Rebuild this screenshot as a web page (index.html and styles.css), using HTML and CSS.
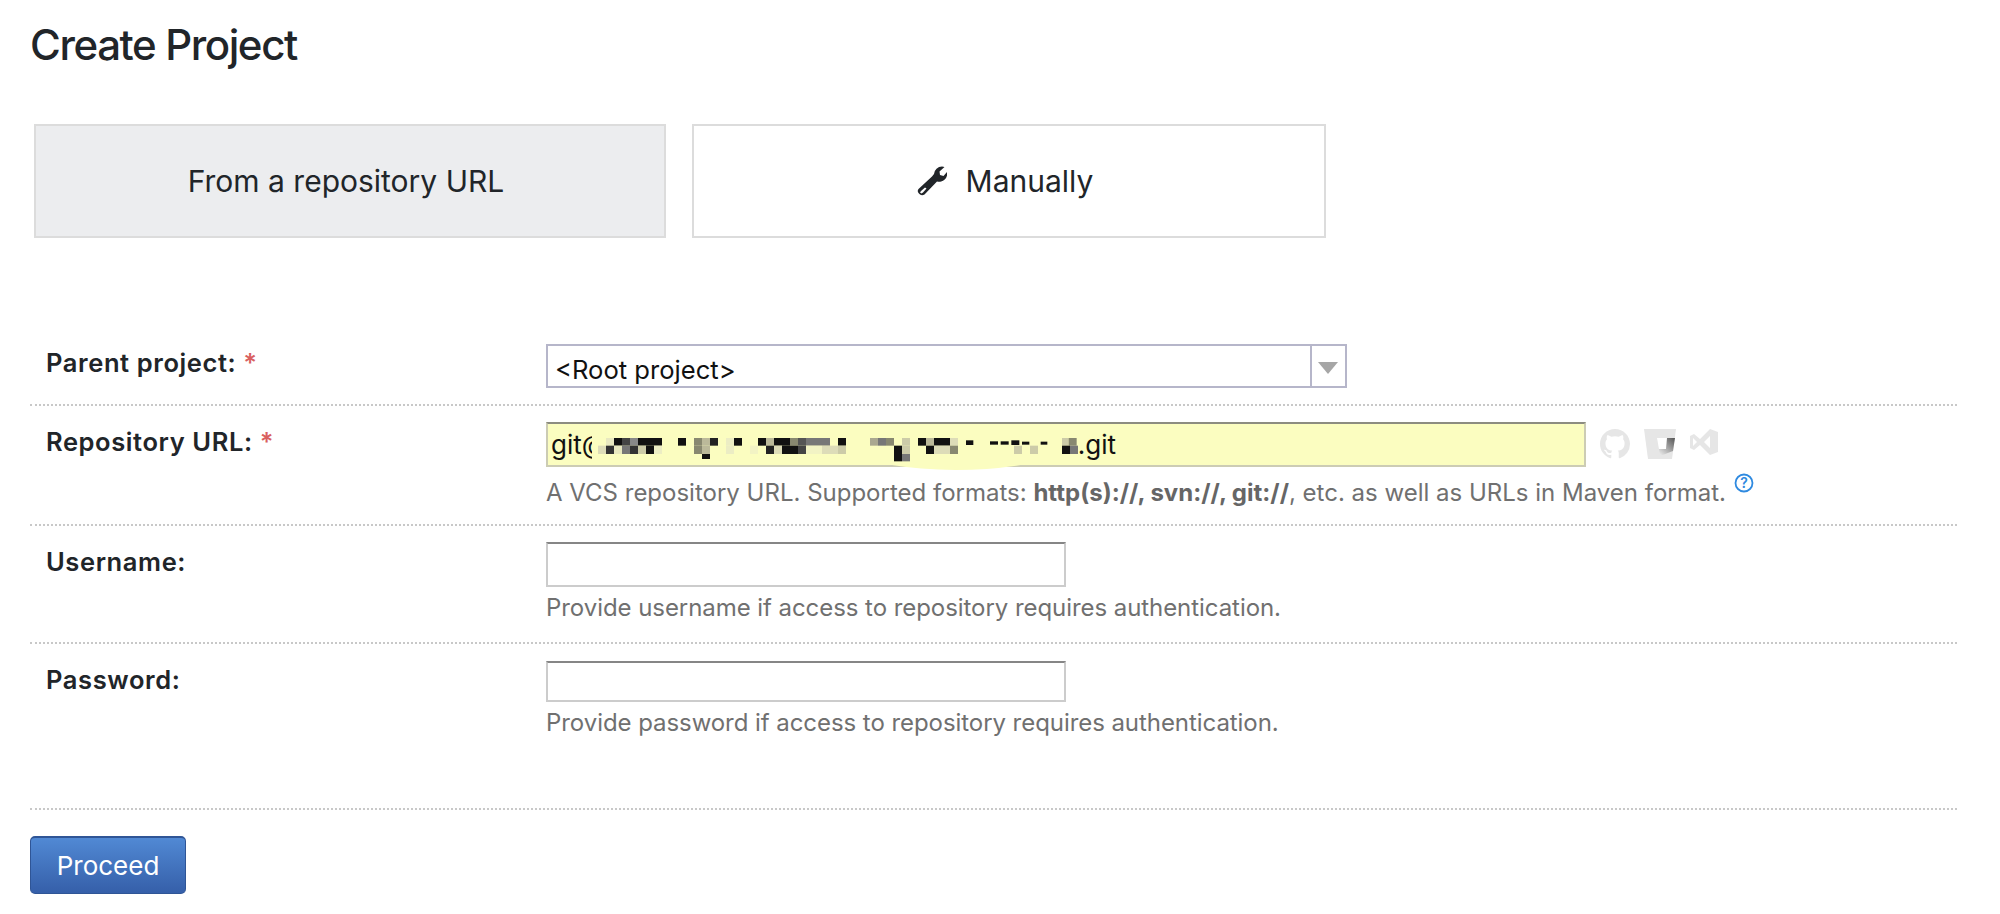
FILE: index.html
```html
<!DOCTYPE html>
<html lang="en">
<head>
    <meta charset="UTF-8">
    <meta name="viewport" content="width=device-width, initial-scale=1.0">
    <title>Create Project</title>
    <link rel="stylesheet" href="styles.css">
</head>
<body>

<h1>Create Project</h1>

<div class="tabs">
    <div class="tab tabActive">From a repository URL</div>
    <div class="tab">
        <svg class="wrench" viewBox="0 0 30 30"><path fill-rule="evenodd" d="M17 8A8 8 0 0 1 25 0.500L27.500 1 22.500 5.500 23 9 26.500 10 30 6A8 8 0 0 1 20 15.500L7.500 28.500Q5 30 3 28.500L1.500 27Q0 25 1.500 23L15 10.500ZM4 25L3 26.500 4.500 27.500 6 26.500 9.500 22.500 8 21.500Z"/></svg>
        Manually
    </div>
</div>

<div class="formRow rowParent">
    <label>Parent project: <span class="req">*</span></label>
    <div class="field">
        <div class="selectBox">
            <span class="selectValue">&lt;Root project&gt;</span>
            <span class="selectArrow"></span>
        </div>
    </div>
</div>

<div class="formRow rowUrl">
    <label>Repository URL: <span class="req">*</span></label>
    <div class="field">
        <div class="urlLine">
            <div class="textInput urlInput">
                <span>git@</span>
                <!-- pixelated part of the address, coordinates are 3x -->
                <svg class="blur" width="486" height="40" viewBox="0 0 1458 120">
                    <path fill="#fbfdc0" d="M885 118Q1090 152 1299 118z"/>
                    <rect x="0" y="0" width="42" height="120" fill="#fbfdc0"/>
                    <g fill="#111">
                        <!-- top row -->
                        <rect x="42" y="39" width="24" height="23" fill="#e8e8c0"/>
                        <rect x="66" y="39" width="24" height="23"/>
                        <rect x="90" y="39" width="24" height="23" fill="#444"/>
                        <rect x="114" y="39" width="24" height="23" fill="#888"/>
                        <rect x="138" y="39" width="72" height="23"/>
                        <rect x="258" y="39" width="24" height="23"/>
                        <rect x="306" y="39" width="24" height="23" fill="#888870"/>
                        <rect x="330" y="39" width="24" height="23" fill="#bbb99a"/>
                        <rect x="354" y="39" width="24" height="23" fill="#222"/>
                        <rect x="402" y="39" width="24" height="23" fill="#ecedc4"/>
                        <rect x="426" y="39" width="24" height="23"/>
                        <rect x="498" y="39" width="24" height="23"/>
                        <rect x="522" y="39" width="24" height="23" fill="#bbb99a"/>
                        <rect x="546" y="39" width="48" height="23"/>
                        <rect x="594" y="39" width="24" height="23" fill="#888870"/>
                        <rect x="618" y="39" width="24" height="23" fill="#555"/>
                        <rect x="642" y="39" width="72" height="23" fill="#777"/>
                        <rect x="738" y="39" width="24" height="23"/>
                        <rect x="834" y="39" width="24" height="23" fill="#aaa890"/>
                        <rect x="858" y="39" width="24" height="23" fill="#777"/>
                        <rect x="882" y="39" width="24" height="23" fill="#888870"/>
                        <rect x="930" y="39" width="24" height="23" fill="#cccba8"/>
                        <rect x="978" y="39" width="24" height="23"/>
                        <rect x="1002" y="39" width="24" height="23" fill="#bbb99a"/>
                        <rect x="1026" y="39" width="48" height="23"/>
                        <rect x="1074" y="39" width="24" height="23" fill="#dddcb8"/>
                        <rect x="1122" y="46" width="22" height="14"/>
                        <rect x="1194" y="49" width="24" height="10"/>
                        <rect x="1226" y="49" width="24" height="10"/>
                        <rect x="1258" y="46" width="24" height="14"/>
                        <rect x="1290" y="50" width="22" height="9"/>
                        <rect x="1346" y="50" width="20" height="9"/>
                        <rect x="1410" y="39" width="20" height="23" fill="#cccba8"/>
                        <rect x="1430" y="39" width="24" height="23" fill="#888870"/>
                        <!-- middle row -->
                        <rect x="18" y="62" width="24" height="25" fill="#dddcb8"/>
                        <rect x="42" y="62" width="24" height="25" fill="#333"/>
                        <rect x="66" y="62" width="24" height="25" fill="#e8e8c0"/>
                        <rect x="90" y="62" width="24" height="25" fill="#777"/>
                        <rect x="114" y="62" width="24" height="25" fill="#333"/>
                        <rect x="138" y="62" width="24" height="25" fill="#cccba8"/>
                        <rect x="162" y="62" width="24" height="25"/>
                        <rect x="186" y="62" width="24" height="25" fill="#ecedc4"/>
                        <rect x="306" y="62" width="24" height="25" fill="#888870"/>
                        <rect x="330" y="62" width="24" height="25" fill="#bbb99a"/>
                        <rect x="402" y="62" width="24" height="25" fill="#ecedc4"/>
                        <rect x="474" y="62" width="24" height="25" fill="#f2f3c4"/>
                        <rect x="522" y="62" width="24" height="25" fill="#222"/>
                        <rect x="546" y="62" width="24" height="25" fill="#dddcb8"/>
                        <rect x="570" y="62" width="48" height="25"/>
                        <rect x="618" y="62" width="24" height="25" fill="#444"/>
                        <rect x="642" y="62" width="48" height="25" fill="#f2f3c4"/>
                        <rect x="690" y="62" width="48" height="25" fill="#dddcb8"/>
                        <rect x="738" y="62" width="24" height="25" fill="#cccba8"/>
                        <rect x="906" y="62" width="24" height="25"/>
                        <rect x="930" y="62" width="24" height="25" fill="#cccba8"/>
                        <rect x="1002" y="62" width="24" height="25"/>
                        <rect x="1026" y="62" width="48" height="25" fill="#dddcb8"/>
                        <rect x="1074" y="62" width="24" height="25" fill="#888870"/>
                        <rect x="1266" y="62" width="24" height="25" fill="#cccba8"/>
                        <rect x="1314" y="62" width="24" height="25" fill="#cccba8"/>
                        <rect x="1410" y="62" width="24" height="25"/>
                        <rect x="1434" y="62" width="24" height="25" fill="#777"/>
                        <!-- bottom row -->
                        <rect x="330" y="87" width="24" height="15"/>
                        <rect x="906" y="87" width="24" height="22"/>
                        <rect x="930" y="87" width="24" height="22" fill="#777"/>
                    </g>
                </svg>
                <span>.git</span>
            </div>
            <div class="vcsIcons">
                <svg width="30" height="30" viewBox="0 0 16 16"><path fill="#e6e6e6" d="M8 0C3.580 0 0 3.580 0 8c0 3.540 2.290 6.530 5.470 7.590.4.070.55-.17.55-.38 0-.19-.01-.82-.01-1.490-2.010.37-2.530-.49-2.690-.94-.09-.23-.48-.94-.82-1.130-.28-.15-.68-.52-.01-.53.63-.01 1.080.58 1.230.82.72 1.210 1.870.87 2.330.66.070-.52.28-.87.51-1.070-1.780-.2-3.640-.89-3.640-3.950 0-.87.31-1.590.82-2.150-.08-.2-.36-1.020.08-2.120 0 0 .67-.21 2.200.82.64-.18 1.320-.27 2-.27s1.360.09 2 .27c1.530-1.040 2.200-.82 2.200-.82.44 1.100.16 1.920.08 2.120.51.56.82 1.270.82 2.150 0 3.070-1.870 3.750-3.650 3.950.29.25.54.73.54 1.480 0 1.070-.01 1.930-.01 2.200 0 .21.15.46.55.38A8.010 8.010 0 0 0 16 8c0-4.420-3.580-8-8-8z"/></svg>
                <svg width="32" height="30" viewBox="0 0 32 30"><defs><linearGradient id="bbGrad" x1="1" y1="0" x2="0.200" y2="1"><stop offset="0" stop-color="#555"/><stop offset="1" stop-color="#e6e6e6"/></linearGradient></defs><path fill="#e6e6e6" d="M0 0H32L28 30H4z"/><path fill="#fff" d="M13 9H24L22 20H15z"/><path fill="url(#bbGrad)" d="M23 9H31L29 22 16 27 15 20H22z"/></svg>
                <svg width="28" height="26" viewBox="0 0 28 26"><path fill="#e6e6e6" fill-rule="evenodd" d="M20 0L28 3V23L20 26 10 16 4 21 0 19V7L4 5 10 10ZM20 7L14 13 20 19ZM3 9V17L7 13Z"/></svg>
            </div>
        </div>
        <p class="hint hintUrl">A VCS repository URL. Supported formats: <b>http(s)://, svn://, git://</b>, etc. as well as URLs in Maven format.<svg class="helpIcon" width="20" height="20" viewBox="0 0 20 20"><circle cx="10" cy="10" r="8.500" fill="none" stroke="#2f8ae0" stroke-width="1.800"/><text x="10" y="15" text-anchor="middle" class="helpMark">?</text></svg></p>
    </div>
</div>

<div class="formRow rowUser">
    <label>Username:</label>
    <div class="field">
        <input type="text" class="textInput shortInput userInput">
        <p class="hint">Provide username if access to repository requires authentication.</p>
    </div>
</div>

<div class="formRow rowPass">
    <label>Password:</label>
    <div class="field">
        <input type="password" class="textInput shortInput passInput">
        <p class="hint">Provide password if access to repository requires authentication.</p>
    </div>
</div>

<button class="proceedBtn">Proceed</button>

</body>
</html>
```

FILE: styles.css
```css
html, body {
    height: 914px;
    overflow: hidden;
}
body {
    font-family: Inter, "Liberation Sans", sans-serif;
    margin: 0;
    padding: 0 43px 0 30px;
    background-color: #fff;
    color: #212529;
}
h1 {
    font-size: 42px;
    font-weight: 500;
    line-height: 50px;
    margin: 20px 0 0;
    letter-spacing: -1.4px;
}

/* Tabs */
.tabs {
    display: flex;
    gap: 26px;
    margin: 54px 0 0 4px;
}
.tab {
    width: 634px;
    height: 114px;
    box-sizing: border-box;
    border: 2px solid #dcdcdc;
    padding-right: 8px;
    display: flex;
    align-items: center;
    justify-content: center;
    gap: 19px;
    font-size: 30px;
}
.tabActive {
    width: 632px;
    background-color: #ecedef;
}
.wrench {
    width: 30px;
    height: 30px;
    fill: #212529;
}

/* Form rows */
.formRow {
    display: flex;
    border-bottom: 2px dotted #c8c8c8;
    box-sizing: border-box;
}
.formRow label {
    width: 516px;
    padding-left: 16px;
    box-sizing: border-box;
    font-size: 25.500px;
    font-weight: 600;
    letter-spacing: 0.6px;
    flex-shrink: 0;
}
.req {
    color: #d9605f;
}
.rowParent {
    margin-top: 106px;
    height: 62px;
}
.rowParent label {
    line-height: 38px;
}
.rowUrl {
    height: 120px;
    padding-top: 16px;
}
.rowUrl label {
    line-height: 40px;
}
.rowUser {
    height: 118px;
    padding-top: 16px;
}
.rowUser label {
    line-height: 40px;
}
.rowPass {
    height: 166px;
    padding-top: 17px;
}
.rowPass label {
    line-height: 38px;
}
.field {
    flex: 1;
}

.selectBox {
    width: 801px;
    height: 44px;
    box-sizing: border-box;
    border: 2px solid #b6b6ca;
    display: flex;
    font-size: 25.600px;
    color: #111;
}
.selectValue {
    flex: 1;
    padding: 6px 0 0 7px;
    line-height: 36px;
    border-right: 2px solid #b6b6ca;
}
.selectArrow {
    width: 33px;
    position: relative;
}
.selectArrow::after {
    content: "";
    position: absolute;
    left: 6px;
    top: 16px;
    border-left: 10px solid transparent;
    border-right: 10px solid transparent;
    border-top: 12px solid #a6a6a6;
}

.urlLine {
    display: flex;
    align-items: flex-start;
}
.textInput {
    box-sizing: border-box;
    border: 2px solid #ccc;
    border-top-color: #868686;
    background-color: #fff;
    padding: 0 4px;
    margin: 0;
    font-family: inherit;
    font-size: 26px;
    color: #111;
    display: block;
    outline: none;
    border-radius: 0;
}
.urlInput {
    width: 1040px;
    height: 45px;
    padding-left: 3px;
    background-color: #fbfdc0;
    border-color: #8c8c80 #ccccb4 #ccccb4 #ccccb4;
    display: flex;
    align-items: center;
}
.blur {
    flex-shrink: 0;
    margin-left: -15px;
    overflow: visible;
}
.shortInput {
    width: 520px;
}
.userInput {
    height: 45px;
}
.passInput {
    height: 41px;
}
.vcsIcons {
    display: flex;
    align-items: flex-start;
    gap: 14px;
    margin: 7px 0 0 14px;
}

.hint {
    margin: 5px 0 0;
    font-size: 24px;
    line-height: 32px;
    letter-spacing: -0.06px;
    color: #707070;
}
.hintUrl {
    margin-top: 6px;
    letter-spacing: 0;
}
.hint b {
    font-weight: 700;
    color: #666;
}
.helpIcon {
    margin-left: 8px;
    vertical-align: 8px;
}
.helpMark {
    font-size: 14px;
    font-weight: 600;
    fill: #2f8ae0;
}

.proceedBtn {
    display: block;
    margin-top: 26px;
    width: 156px;
    height: 58px;
    padding: 0;
    box-sizing: border-box;
    border: 1px solid #2f5596;
    border-top: 2px solid #2f5596;
    border-radius: 5px;
    background: linear-gradient(#5189d4, #355fa9);
    color: #fff;
    font-family: inherit;
    font-size: 26px;
    cursor: pointer;
}
```
